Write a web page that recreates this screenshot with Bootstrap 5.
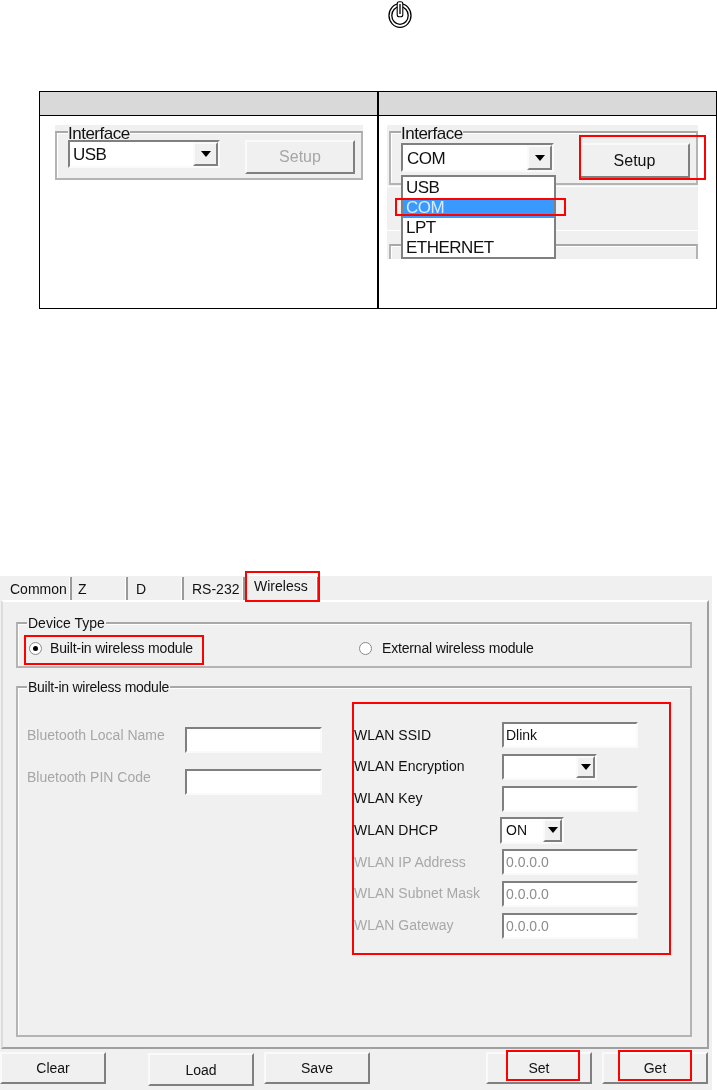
<!DOCTYPE html>
<html lang="en">
<head>
  <meta charset="UTF-8" />
  <meta name="viewport" content="width=device-width, initial-scale=1.0" />
  <title>Interface setup</title>
  <link href="https://cdn.jsdelivr.net/npm/bootstrap@5.3.2/dist/css/bootstrap.min.css" rel="stylesheet" />
  <style>
    body { background: #fff; font-family: "Liberation Sans", Arial, sans-serif; color: #111; }
    .page { position: relative; width: 717px; height: 1090px; overflow: hidden; }
    .power-wrap { height: 91px; padding: 1px 0 0 388px; }
    .power-wrap svg { display: block; }

    /* top table */
    .doc-wrap { height: 485px; }
    .doc-table { width: 678px; margin: 0 0 0 39px; table-layout: fixed; border-collapse: collapse; }
    .doc-table th, .doc-table td { border: 1px solid #000; padding: 0; }
    .doc-table th:first-child, .doc-table td:first-child { border-right-width: 2px; }
    .doc-table th { height: 24px; background: #d9d9d9; }
    .doc-table td { height: 193px; vertical-align: top; background: #fff; }

    .shot-a { width: 308px; height: 55px; margin: 9px 0 0 15px; padding-top: 6px; background: #f0f0f0; font-size: 17px; letter-spacing: -.5px; filter: blur(.4px); }
    .shot-b { position: relative; width: 311px; height: 134px; margin: 9px 0 0 8px; padding-top: 6px; background: #f0f0f0; font-size: 17px; letter-spacing: -.5px; overflow: hidden; filter: blur(.4px); }

    /* windows bits */
    .grp { border: 2px solid #b4b4b4; border-top-color: #a8a8a8; box-shadow: inset 1px 1px 0 #fff; }
    .grp-title { width: fit-content; height: 17px; line-height: 17px; background: #f0f0f0; }
    .sunken { background: #fff; border: 2px solid; border-color: #808080 #fafafa #fafafa #808080; }
    .raised { border: 2px solid; border-color: #fafafa #808080 #808080 #fafafa; background: #f0f0f0; border-radius: 0; padding: 0; color: #111; }
    .arrow-btn { width: 19px; align-self: stretch; display: flex; align-items: center; justify-content: center; }
    .arrow-btn::after { content: ""; border: 5px solid transparent; border-top: 6px solid #000; border-bottom: 0; }
    .big-arrow { width: 25px; }
    .combo-txt { padding-top: 2px; }

    .grp-a { height: 49px; }
    .grp-a .grp-title { margin: -8px 0 0 11px; }
    .combo-a { width: 152px; height: 28px; margin: -2px 0 0 11px; padding-left: 3px; }
    .setup-a { width: 110px; height: 34px; margin: -2px 0 0 25px; font-size: 16px; color: #a6a6a6; }

    .grp-b { height: 54px; margin-left: 2px; }
    .grp-b .grp-title { margin: -8px 0 0 10px; }
    .strip { height: 1px; background: #fff; }
    .strip-1 { margin-top: 1px; }
    .strip-2 { margin-top: 43px; }
    .grp-c { height: 40px; margin: 13px 0 0 2px; border-bottom: 0; }
    .combo-b { width: 153px; height: 29px; margin: 1px 0 0 10px; padding-left: 4px; }
    .setup-b { width: 111px; height: 35px; margin: 1px 0 0 25px; font-size: 16px; }
    .drop { position: absolute; left: 14px; top: 50px; width: 155px; height: 84px; background: #fff; border: 2px solid #808080; line-height: 20px; padding-top: 1px; }
    .drop div { height: 20px; padding-left: 3px; }
    .drop .picked { background: #3a99ff; color: #dbecff; }

    /* lower window */
    .shot-c { width: 712px; height: 514px; background: #f0f0f0; font-size: 14px; filter: blur(.3px); }
    .tabs { height: 24px; padding: 1px 0 0 6px; }
    .tab-item { height: 23px; line-height: 24px; border-right: 2px solid #9a9a9a; box-shadow: -1px 0 0 #fff inset; }
    .tab-item.on { line-height: 18px; border-right-color: #808080; }
    .tab-common { width: 66px; padding-left: 4px; }
    .tab-z { width: 56px; padding-left: 6px; }
    .tab-d { width: 56px; padding-left: 8px; }
    .tab-rs { width: 61px; padding-left: 8px; }
    .tab-wl { width: 74px; padding-left: 9px; }
    .panel { width: 708px; height: 449px; margin-left: 1px; border: 2px solid; border-color: #fff #a0a0a0 #a0a0a0 #dcdcdc; padding: 20px 15px 0 13px; }
    .grp-dev { height: 46px; }
    .grp-dev .grp-title { margin: -9px 0 0 9px; padding: 0 1px; }
    .radio-row { height: 20px; margin-top: 6px; padding-left: 11px; letter-spacing: -.17px; }
    .radio-dot { width: 13px; height: 13px; border-radius: 50%; background: #fff; border: 1px solid #8a8a8a; display: flex; align-items: center; justify-content: center; }
    .radio-dot.set::after { content: ""; width: 5px; height: 5px; border-radius: 50%; background: #000; }
    .radio-first { width: 309px; margin-left: 8px; }
    .radio-second { margin-left: 10px; }
    .grp-wifi { height: 351px; margin-top: 18px; }
    .grp-wifi .grp-title { margin: -9px 0 0 9px; padding: 0 1px; letter-spacing: -.25px; }
    .bt-col { width: 336px; padding: 31px 0 0 9px; }
    .bt-row { height: 26px; margin-bottom: 16px; }
    .bt-row span { width: 158px; line-height: 16px; color: #a6a6a6; align-self: flex-start; }
    .bt-box { width: 137px; height: 26px; }
    .wl-col { padding-top: 26px; }
    .wl-row { height: 26px; margin-bottom: 5.75px; }
    .wl-row > span { width: 148px; }
    .wl-row.off > span { color: #a8a8a8; }
    .wl-box { width: 136px; height: 26px; padding-left: 2px; line-height: 22px; }
    .wl-row.off .wl-box { color: #8c8c8c; }
    .wl-combo { width: 95px; }
    .wl-dhcp { width: 64px; height: 27px; margin-left: -2px; padding-left: 4px; }
    .btn-bar { height: 41px; padding-top: 3px; }
    .bar-btn { width: 106px; height: 32px; font-size: 14px; line-height: 26px; }
    .load-btn { margin: 1px 0 0 42px; height: 33px; }
    .gap-10 { margin-left: 10px; }
    .gap-116 { margin-left: 116px; }

    /* red callouts drawn over the screenshots */
    .callout { position: absolute; border: 2px solid #f00; pointer-events: none; }
    .c1 { left: 579px; top: 135px; width: 127px; height: 45px; }
    .c2 { left: 395px; top: 198px; width: 171px; height: 18px; }
    .c3 { left: 245px; top: 571px; width: 75px; height: 31px; }
    .c4 { left: 24px; top: 635px; width: 180px; height: 30px; }
    .c5 { left: 352px; top: 702px; width: 319px; height: 253px; }
    .c6 { left: 506px; top: 1050px; width: 74px; height: 31px; }
    .c7 { left: 618px; top: 1050px; width: 74px; height: 31px; }
  </style>
</head>
<body>
  <div class="page">
    <div class="power-wrap">
      <svg width="24" height="27" viewBox="0 0 24 27" fill="none" stroke="#000">
        <ellipse cx="12" cy="14.5" rx="11" ry="11.8" stroke-width="1.3" />
        <ellipse cx="12" cy="14.5" rx="8.2" ry="8.8" stroke-width="1.3" />
        <rect x="9.2" y="0.7" width="5.6" height="15" rx="2" fill="#fff" stroke-width="1.1" />
        <line x1="12" y1="3" x2="12" y2="13" stroke-width="1.3" />
      </svg>
    </div>

    <div class="doc-wrap">
      <table class="doc-table">
        <thead>
          <tr><th></th><th></th></tr>
        </thead>
        <tbody>
          <tr>
            <td>
              <div class="shot-a">
                <div class="grp grp-a">
                  <div class="grp-title">Interface</div>
                  <div class="d-flex">
                    <div class="combo-a sunken d-flex align-items-center justify-content-between"><span class="combo-txt">USB</span><span class="arrow-btn big-arrow raised"></span></div>
                    <button class="btn setup-a raised" type="button">Setup</button>
                  </div>
                </div>
              </div>
            </td>
            <td>
              <div class="shot-b">
                <div class="grp grp-b">
                  <div class="grp-title">Interface</div>
                  <div class="d-flex">
                    <div class="combo-b sunken d-flex align-items-center justify-content-between"><span class="combo-txt">COM</span><span class="arrow-btn big-arrow raised"></span></div>
                    <button class="btn setup-b raised" type="button">Setup</button>
                  </div>
                </div>
                <div class="strip strip-1"></div>
                <div class="strip strip-2"></div>
                <div class="grp grp-c"></div>
                <div class="drop">
                  <div>USB</div>
                  <div class="picked">COM</div>
                  <div>LPT</div>
                  <div>ETHERNET</div>
                </div>
              </div>
            </td>
          </tr>
        </tbody>
      </table>
    </div>

    <div class="shot-c">
      <div class="tabs d-flex">
        <div class="tab-item tab-common">Common</div>
        <div class="tab-item tab-z">Z</div>
        <div class="tab-item tab-d">D</div>
        <div class="tab-item tab-rs">RS-232</div>
        <div class="tab-item tab-wl on">Wireless</div>
      </div>
      <div class="panel">
        <div class="grp grp-dev">
          <div class="grp-title">Device Type</div>
          <div class="radio-row d-flex align-items-center">
            <span class="radio-dot set"></span><span class="radio-first">Built-in wireless module</span>
            <span class="radio-dot"></span><span class="radio-second">External wireless module</span>
          </div>
        </div>
        <div class="grp grp-wifi">
          <div class="grp-title">Built-in wireless module</div>
          <div class="d-flex">
            <div class="bt-col">
              <div class="bt-row d-flex"><span>Bluetooth Local Name</span><div class="bt-box sunken"></div></div>
              <div class="bt-row d-flex"><span>Bluetooth PIN Code</span><div class="bt-box sunken"></div></div>
            </div>
            <div class="wl-col">
              <div class="wl-row d-flex align-items-center"><span>WLAN SSID</span><div class="wl-box sunken">Dlink</div></div>
              <div class="wl-row d-flex align-items-center"><span>WLAN Encryption</span><div class="wl-box wl-combo sunken d-flex justify-content-end"><span class="arrow-btn raised"></span></div></div>
              <div class="wl-row d-flex align-items-center"><span>WLAN Key</span><div class="wl-box sunken"></div></div>
              <div class="wl-row d-flex align-items-center"><span>WLAN DHCP</span><div class="wl-box wl-dhcp sunken d-flex align-items-center justify-content-between">ON<span class="arrow-btn raised"></span></div></div>
              <div class="wl-row off d-flex align-items-center"><span>WLAN IP Address</span><div class="wl-box sunken">0.0.0.0</div></div>
              <div class="wl-row off d-flex align-items-center"><span>WLAN Subnet Mask</span><div class="wl-box sunken">0.0.0.0</div></div>
              <div class="wl-row off d-flex align-items-center"><span>WLAN Gateway</span><div class="wl-box sunken">0.0.0.0</div></div>
            </div>
          </div>
        </div>
      </div>
      <div class="btn-bar d-flex align-items-start">
        <button class="btn bar-btn raised" type="button">Clear</button>
        <button class="btn bar-btn raised load-btn" type="button">Load</button>
        <button class="btn bar-btn raised gap-10" type="button">Save</button>
        <button class="btn bar-btn raised gap-116" type="button">Set</button>
        <button class="btn bar-btn raised gap-10" type="button">Get</button>
      </div>
    </div>

    <div class="callout c1"></div>
    <div class="callout c2"></div>
    <div class="callout c3"></div>
    <div class="callout c4"></div>
    <div class="callout c5"></div>
    <div class="callout c6"></div>
    <div class="callout c7"></div>
  </div>
  <script src="https://cdn.jsdelivr.net/npm/bootstrap@5.3.2/dist/js/bootstrap.bundle.min.js"></script>
</body>
</html>
